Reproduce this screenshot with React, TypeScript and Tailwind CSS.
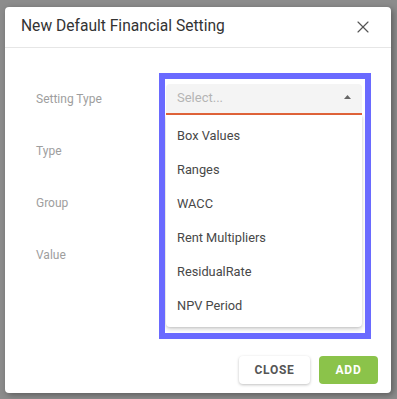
import React from "react";
import { X } from "lucide-react";

const options = ["Box Values", "Ranges", "WACC", "Rent Multipliers", "ResidualRate", "NPV Period"];
const labels = ["Setting Type", "Type", "Group", "Value"];

const SelectField = () => {
    return (
        <div className="relative w-[196px]">
            <div className="flex items-center justify-between h-[31px] pl-[11px] pr-[10px] bg-[#f4f4f4] rounded-t-[4px] border-b-2 border-[#e2643a]">
                <span className="text-[13px] text-[#b4b4b4]">Select...</span>
                <svg width="7" height="4" viewBox="0 0 7 4" className="mb-[2px] mr-[1px]">
                    <path d="M0 4 L3.5 0 L7 4 Z" fill="#666" />
                </svg>
            </div>
            <div className="absolute left-0 top-[31px] w-[196px] z-10 bg-white rounded-b-[4px] py-[4px] shadow-[0_2px_4px_rgba(0,0,0,0.18),0_1px_2px_rgba(0,0,0,0.08)]">
                {options.map((opt) => (
                    <div key={opt} className="h-[34px] flex items-center pl-[11px] text-[12.8px] text-[#484848]">
                        {opt}
                    </div>
                ))}
            </div>
            <div className="absolute left-[-7px] top-[-11px] w-[212px] h-[266px] border-[6px] border-[#6a6aff] z-20 pointer-events-none"></div>
        </div>
    );
}

const App = () => {
    return (
        <div className="w-[397px] h-[399px] bg-[#8c8c8c] pl-[5px] pt-[7px] font-['Roboto',sans-serif]">
            <div className="w-[386px] h-[386px] bg-white rounded-[4px] flex flex-col shadow-[2px_2px_6px_rgba(0,0,0,0.35)]">
                <div className="h-[41px] flex items-center justify-between pl-[16px] pr-[18px] border-b border-[#e6e6e6]">
                    <span className="text-[15.6px] text-[#333]">New Default Financial Setting</span>
                    <X size={20} strokeWidth={1.4} color="#555" />
                </div>
                <div className="flex flex-col pt-[25px] pl-[31px]">
                    {labels.map((label, i) => (
                        <div key={label} className="h-[52px] flex items-center">
                            <span className="w-[130px] text-[12px] text-[#9e9e9e]">{label}</span>
                            {i == 0 && <SelectField />}
                            {i > 0 && <div className="w-[196px] h-[31px] border-b border-[#e0e0e0]"></div>}
                        </div>
                    ))}
                </div>
                <div className="mt-auto flex justify-end gap-[9px] pr-[13px] pb-[9px]">
                    <button type="button" className="w-[71px] h-[28px] rounded-[4px] bg-white text-[12px] font-bold tracking-[0.06em] text-[#555] shadow-[0_1px_3px_rgba(0,0,0,0.25)]">
                        CLOSE
                    </button>
                    <button type="button" className="w-[59px] h-[28px] rounded-[4px] bg-[#8bc34a] text-[12px] font-bold tracking-[0.06em] text-white">
                        ADD
                    </button>
                </div>
            </div>
        </div>
    );
}

export default App;
